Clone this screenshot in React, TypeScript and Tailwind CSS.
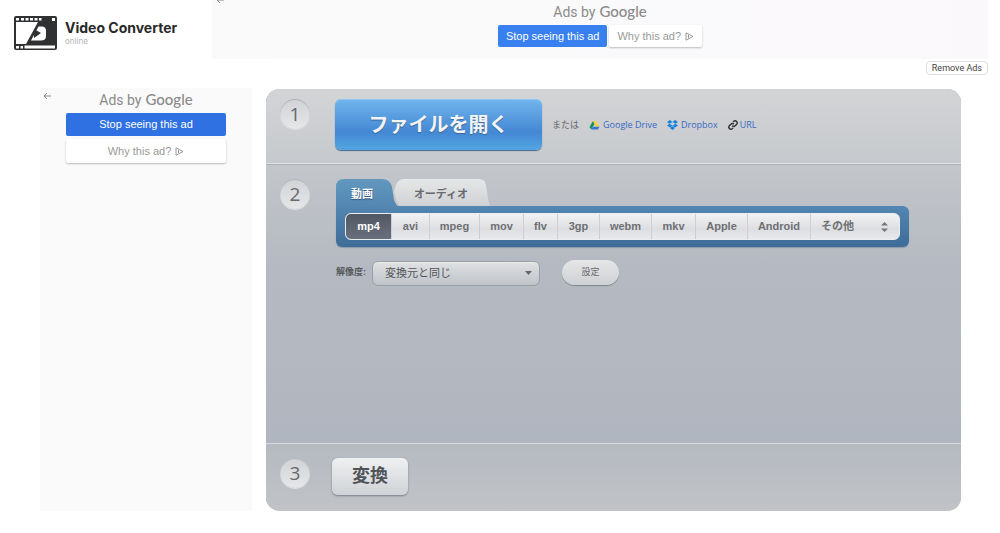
import { useState } from "react";
import type { ReactNode } from "react";

const formats = [
  { name: "mp4", width: "w-[46px]" },
  { name: "avi", width: "w-[38px]" },
  { name: "mpeg", width: "w-[50px]" },
  { name: "mov", width: "w-[44px]" },
  { name: "flv", width: "w-[34px]" },
  { name: "3gp", width: "w-[42px]" },
  { name: "webm", width: "w-[52px]" },
  { name: "mkv", width: "w-[44px]" },
  { name: "Apple", width: "w-[52px]" },
  { name: "Android", width: "w-[63px]" },
];

function Logo() {
  return (
    <a href="#" className="flex items-center gap-2">
      <svg width="43" height="34" viewBox="0 0 43 34" aria-hidden="true">
        <rect width="43" height="34" rx="2" fill="#303133" />
        <path d="M2 6h22L12 28H2z" fill="#fff" />
        <path d="M2 2h3v2.500H2zM7 2h3v2.500H7zM11.500 2h3v2.500h-3zM16 2h3v2.500h-3zM20.500 2h3v2.500h-3zM25 2h2.500v2.500H25zM38 2h3v3h-3z" fill="#fff" />
        <path d="M2 30h3v2.500H2zM6.500 30h2.500v2.500H6.500zM10.500 29.500H41v3H10.500z" fill="#fff" />
        <path d="M24.500 10.500H28Q32 10.500 32 15V20Q32 24.500 27 24.500H17z" fill="#fff" />
        <path d="M20 13l7 4-7 5z" fill="#303133" />
      </svg>
      <span className="flex flex-col">
        <span className="font-['Inter','Liberation_Sans',sans-serif] text-[14px] leading-4 font-bold whitespace-nowrap text-[#292929]">
          Video Converter
        </span>
        <span className="font-['Inter',sans-serif] text-[8px] leading-[10px] text-[#b5b5b5]">online</span>
      </span>
    </a>
  );
}

function BackArrow() {
  return (
    <svg width="8" height="8" viewBox="0 0 8 8" fill="none" stroke="#888" aria-hidden="true">
      <path d="M8 4H1M4 1L1 4l3 3" />
    </svg>
  );
}

function AdTitle() {
  return (
    <p className="flex items-baseline justify-center gap-1 leading-5 text-[#8b8b8b]">
      <span className="font-['Roboto',sans-serif] text-[14px]">Ads by</span>
      <span className="font-['Lato',sans-serif] text-[15px] font-medium">Google</span>
    </p>
  );
}

function WhyLabel() {
  return (
    <>
      Why this ad?
      <svg width="9" height="9" viewBox="0 0 9 9" fill="none" stroke="#999" aria-hidden="true">
        <path d="M1 0.800L8 4.500L1 8.200zM3.500 3v3" />
      </svg>
    </>
  );
}

function Step({ number, children, className }: { number: number; children: ReactNode; className: string }) {
  return (
    <section className={`flex pl-[14px] ${className}`}>
      <span className="flex size-[30px] shrink-0 items-center justify-center rounded-full bg-linear-to-b from-[#d0d2d5] to-[#e6e7e9] font-['Open_Sans',sans-serif] text-[19px] text-[#66696d] shadow-[inset_0_1px_1px_#aeb1b5,0_1px_0_#e0e1e3]">
        {number}
      </span>
      {children}
    </section>
  );
}

function Tabs({ tab, onChange }: { tab: string; onChange: (tab: string) => void }) {
  return (
    <div className="flex h-[27px]">
      <button
        onClick={() => onChange("video")}
        aria-pressed={tab === "video"}
        className="relative h-[27px] w-[56px] pt-1 text-[11px] font-bold text-white"
      >
        <svg width="64" height="28" viewBox="0 0 64 28" className="absolute top-0 left-0" aria-hidden="true">
          <defs>
            <linearGradient id="tabBlue" x2="0" y2="1">
              <stop stopColor="#6298bf" />
              <stop offset="1" stopColor="#5386b1" />
            </linearGradient>
          </defs>
          <path d="M0 28V8Q0 0 8 0H46Q54 0 56 8L58 21Q60 27 64 28z" fill="url(#tabBlue)" />
        </svg>
        <span className="relative pr-1 text-shadow-[0_1px_1px_#294d6e]">動画</span>
      </button>
      <button
        onClick={() => onChange("audio")}
        aria-pressed={tab === "audio"}
        className="relative h-[27px] w-[98px] pt-1 text-[11px] font-bold text-[#66696d]"
      >
        <svg width="98" height="27" viewBox="0 0 98 27" className="absolute top-0 left-0" aria-hidden="true">
          <defs>
            <linearGradient id="tabGrey" x2="0" y2="1">
              <stop stopColor="#e6e7e8" />
              <stop offset="1" stopColor="#cfd1d4" />
            </linearGradient>
          </defs>
          <path d="M3 9Q5 0 12 0H87Q93 0 94 6L96 19Q97 25 98 27H9Q5 26 4 20L2 13z" fill="url(#tabGrey)" />
        </svg>
        <span className="relative">オーディオ</span>
      </button>
    </div>
  );
}

export default function App() {
  const [format, setFormat] = useState("mp4");
  const [tab, setTab] = useState("video");

  return (
    <div className="bg-white pb-5 font-['Liberation_Sans','Noto_Sans_CJK_JP',sans-serif]">
      <header className="flex h-[59px] pr-3 pl-[14px]">
        <div className="w-[198px] shrink-0 pt-4">
          <Logo />
        </div>
        {/* Top banner */}
        <div className="relative flex-1 bg-linear-to-r from-[#fafafa] to-[#faf8fb] pt-[1px]">
          <div className="absolute -top-1 left-1">
            <BackArrow />
          </div>
          <AdTitle />
          <div className="mt-[3px] flex justify-center gap-[2px] text-[11px]">
            <button className="h-[22px] rounded-xs bg-[#387ff0] px-2 text-white">Stop seeing this ad</button>
            <button className="flex h-[22px] items-center gap-1 rounded-xs bg-white px-2 text-[#999] shadow-[0_1px_2px_#bbb]">
              <WhyLabel />
            </button>
          </div>
        </div>
      </header>

      <div className="flex h-[29px] items-start justify-end pt-[2px] pr-3">
        <button className="h-[14px] rounded-sm border border-[#ddd] bg-white px-[5px] font-['Roboto',sans-serif] text-[9px] leading-3 text-[#444]">
          Remove Ads
        </button>
      </div>

      <div className="flex gap-[14px] pr-[39px] pl-10">
        {/* Side banner */}
        <aside className="relative w-[212px] shrink-0 bg-[#fafafa] px-[26px] pt-[1px]">
          <div className="absolute top-1 left-[3px]">
            <BackArrow />
          </div>
          <AdTitle />
          <div className="mt-[3px] flex flex-col gap-[3px] text-[11px]">
            <button className="h-[23px] rounded-xs bg-[#2f71e2] text-white">Stop seeing this ad</button>
            <button className="flex h-[24px] items-center justify-center gap-1 rounded-xs bg-white text-[#999] shadow-[0_1px_2px_#bbb]">
              <WhyLabel />
            </button>
          </div>
        </aside>

        <main className="mt-[1px] min-w-0 flex-1 overflow-hidden rounded-[14px] bg-linear-to-b from-[#b9bec5] via-[#b0b6bf] to-[#c1c3c6] shadow-[inset_0_0_1px_#999]">
          <Step
            number={1}
            className="h-[75px] items-start border-b border-[#e0e2e5] bg-linear-to-b from-[#d3d4d6] to-[#c6c9cd] pt-[10px]"
          >
            <button className="ml-[25px] h-[51px] w-[207px] rounded-md bg-linear-to-b from-[#71b5ec] via-[#4488d4] via-65% to-[#52a6e2] text-[20px] font-bold text-[#f4f4f4] shadow-[0_1px_1px_#49688b,inset_0_1px_0_#8bc7f2] text-shadow-[0_1px_1px_#386795]">
              ファイルを開く
            </button>
            <div className="flex items-center gap-[10px] pt-[18px] pl-[10px] font-['Open_Sans','Noto_Sans_CJK_JP',sans-serif] text-[9px] leading-4 whitespace-nowrap text-[#356ac3]">
              <span className="text-[#686b6f]">または</span>
              <a href="#" className="flex items-center gap-[3px]">
                <svg width="11" height="10" viewBox="0 0 10 10" aria-hidden="true">
                  <path d="M3.500 1L0 7l1.800 2.500L5 4z" fill="#11945b" />
                  <path d="M3.500 1h3L10 7H6.800z" fill="#ffce3d" />
                  <path d="M3.500 6.800H10L8.300 9.500H1.800z" fill="#3475dc" />
                </svg>
                Google Drive
              </a>
              <a href="#" className="flex items-center gap-[3px]">
                <svg width="11" height="10" viewBox="0 0 11 10" fill="#1682dd" aria-hidden="true">
                  <path d="M3 0L5.500 2 2.500 3.800 0 2zM8 0l3 2-2.500 1.800L5.500 2zM0 5.600l2.500-1.800 3 1.900L3 7.500zM11 5.600L8.500 3.800l-3 1.900L8 7.500zM3 8.100l2.500-1.800L8 8.100 5.500 10z" />
                </svg>
                Dropbox
              </a>
              <a href="#" className="flex items-center gap-[2px]">
                <svg width="10" height="10" viewBox="0 0 24 24" fill="none" stroke="#333" strokeWidth="3.5" aria-hidden="true">
                  <path d="M10 14a5 5 0 0 0 7 0l4-4a5 5 0 0 0-7-7l-2 2M14 10a5 5 0 0 0-7 0l-4 4a5 5 0 0 0 7 7l2-2" />
                </svg>
                URL
              </a>
            </div>
          </Step>

          <Step
            number={2}
            className="h-[279px] items-start border-t border-t-[#adb1b6] bg-linear-to-b from-[#c3c6ca] via-[#b5bac2] via-35% to-[#b0b6bf] pt-[14px] pr-[52px]"
          >
            <div className="ml-[26px] min-w-0 flex-1">
              <Tabs tab={tab} onChange={setTab} />
              <div className="rounded-md rounded-tl-none bg-linear-to-b from-[#5386b1] to-[#3e6c98] px-[9px] py-[7px] shadow-[0_1px_1px_#8d9aaa]">
                <div className="flex h-[27px] overflow-hidden rounded-md border border-[#e9edf1] bg-linear-to-b from-[#f2f2f3] via-[#dcdee1] via-60% to-[#e8e9eb] text-[11px] font-bold text-[#6e7073]">
                  {formats.map(({ name, width }) => (
                    <button
                      key={name}
                      onClick={() => setFormat(name)}
                      className={`shrink-0 border-r border-[#cbced2] ${width} ${
                        format === name ? "bg-linear-to-b from-[#525863] to-[#69707d] text-white" : ""
                      }`}
                    >
                      {name}
                    </button>
                  ))}
                  <div className="relative min-w-0 flex-1">
                    <select aria-label="その他" className="h-full w-full appearance-none bg-transparent pl-[10px]">
                      <option>その他</option>
                    </select>
                    <svg width="7" height="10" viewBox="0 0 7 10" fill="#777" className="pointer-events-none absolute top-[8px] right-[11px]" aria-hidden="true">
                      <path d="M3.500 0L7 3.500H0zM3.500 10L7 6.500H0z" />
                    </svg>
                  </div>
                </div>
              </div>

              <div className="mt-[13px] flex items-center">
                <label htmlFor="resolution" className="w-9 text-[9px] font-bold whitespace-nowrap text-[#55595e]">
                  解像度:
                </label>
                <div className="relative w-[168px]">
                  <select
                    id="resolution"
                    className="h-[25px] w-full appearance-none rounded-md border border-[#9a9fa5] bg-linear-to-b from-[#e0e1e3] to-[#bfc3c8] pl-3 text-[11px] text-[#505357] shadow-[inset_0_1px_0_#eee]"
                  >
                    <option>変換元と同じ</option>
                  </select>
                  <svg width="7" height="4" viewBox="0 0 7 4" fill="#666" className="pointer-events-none absolute top-[11px] right-[8px]" aria-hidden="true">
                    <path d="M0 0h7L3.500 4z" />
                  </svg>
                </div>
                <button className="ml-[22px] h-[25px] w-[57px] rounded-full bg-linear-to-b from-[#e5e6e7] to-[#ced1d4] text-[9px] text-[#686b6f] shadow-[0_1px_1px_#80858b]">
                  設定
                </button>
              </div>
            </div>
          </Step>

          <Step
            number={3}
            className="h-[68px] items-start border-t border-[#d6dade] bg-linear-to-b from-[#b5bac1] to-[#c1c3c6] pt-[14px]"
          >
            <button className="ml-[22px] h-[37px] w-[76px] rounded-md bg-linear-to-b from-[#eff0f1] to-[#cfd2d6] text-[18px] font-bold text-[#505359] shadow-[0_1px_2px_#777d84]">
              変換
            </button>
          </Step>
        </main>
      </div>
    </div>
  );
}
